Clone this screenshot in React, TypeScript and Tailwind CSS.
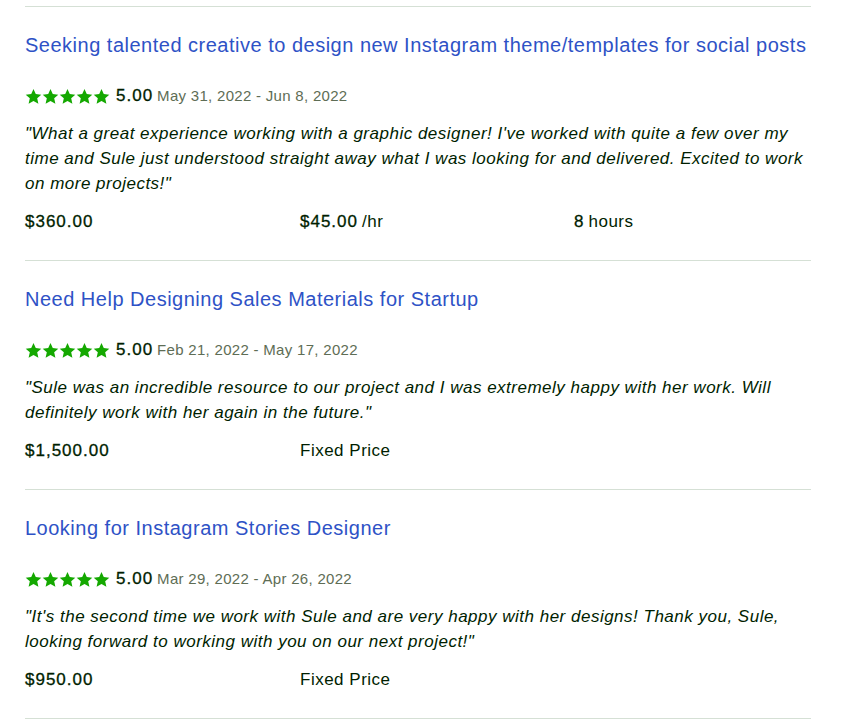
import { Fragment } from 'react';

interface Job {
  title: string;
  dates: string;
  quote: string;
  cols: { strong: string; light?: string }[];
}

const jobs: Job[] = [
  {
    title: 'Seeking talented creative to design new Instagram theme/templates for social posts',
    dates: 'May 31, 2022 - Jun 8, 2022',
    quote:
      '"What a great experience working with a graphic designer! I\'ve worked with quite a few over my time and Sule just understood straight away what I was looking for and delivered. Excited to work on more projects!"',
    cols: [{ strong: '$360.00' }, { strong: '$45.00', light: '/hr' }, { strong: '8', light: 'hours' }],
  },
  {
    title: 'Need Help Designing Sales Materials for Startup',
    dates: 'Feb 21, 2022 - May 17, 2022',
    quote:
      '"Sule was an incredible resource to our project and I was extremely happy with her work. Will definitely work with her again in the future."',
    cols: [{ strong: '$1,500.00' }, { strong: '', light: 'Fixed Price' }],
  },
  {
    title: 'Looking for Instagram Stories Designer',
    dates: 'Mar 29, 2022 - Apr 26, 2022',
    quote:
      '"It\'s the second time we work with Sule and are very happy with her designs! Thank you, Sule, looking forward to working with you on our next project!"',
    cols: [{ strong: '$950.00' }, { strong: '', light: 'Fixed Price' }],
  },
];

function Star() {
  return (
    <svg viewBox="0 0 24 24" className="w-[17px] h-[17px]" fill="#14a800">
      <path d="M12 1.5l3.2 7.1 7.8.8-5.8 5.2 1.7 7.7L12 18.3l-6.9 4 1.7-7.7L1 9.4l7.8-.8z" />
    </svg>
  );
}

export default function App() {
  return (
    <div
      className="bg-white w-[848px] h-[719px] overflow-hidden pt-[6px] pl-[25px] text-[#001e00]"
      style={{ fontFamily: '"Liberation Sans", Arial, sans-serif' }}
    >
      <div className="w-[786px]">
        <div className="h-px bg-[#d5e0d5]" />
        {jobs.map((job, i) => (
          <Fragment key={i}>
            <div className="pt-[25px] pb-[26px]">
              <h4 className="text-[20px] leading-[26px] text-[#2e52c6] tracking-[0.5px]">{job.title}</h4>
              <div className="flex items-center mt-[25px] h-[26px]">
                <div className="flex">
                  {[0, 1, 2, 3, 4].map(s => (
                    <Star key={s} />
                  ))}
                </div>
                <span className="ml-[6px] text-[17px] tracking-[1px] [-webkit-text-stroke:0.3px]">5.00</span>
                <span className="ml-[4px] text-[15px] tracking-[0.3px] text-[#5e6d55]">{job.dates}</span>
              </div>
              <p className="mt-[12px] text-[17px] leading-[25px] italic tracking-[0.5px]">{job.quote}</p>
              <div className="grid grid-cols-[275px_274px_1fr] mt-[13px] text-[17px] leading-[25px]">
                {job.cols.map((c, k) => (
                  <div key={k}>
                    {c.strong && (
                      <span className="tracking-[1px] [-webkit-text-stroke:0.3px]">{c.strong}</span>
                    )}
                    {c.light && (
                      <span className={`tracking-[0.5px] ${c.strong ? 'ml-[4px]' : ''}`}>{c.light}</span>
                    )}
                  </div>
                ))}
              </div>
            </div>
            <div className="h-px bg-[#d5e0d5]" />
          </Fragment>
        ))}
      </div>
    </div>
  );
}
